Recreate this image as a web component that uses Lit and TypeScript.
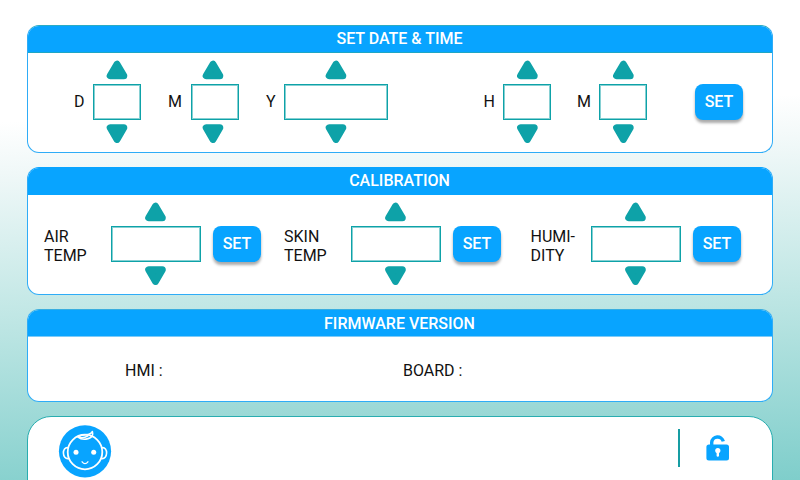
import { LitElement, html, css, svg } from "lit";
import { customElement, property } from "lit/decorators.js";

@customElement("value-stepper")
class ValueStepper extends LitElement {
  @property({ type: Number }) width = 48;
  @property({ type: Number }) shift = 0;

  static styles = css`
    :host {
      display: flex;
      flex-direction: column;
      align-items: center;
      flex: none;
    }
    .arrow {
      display: block;
      width: 22px;
      height: 20px;
      fill: #0ea2a8;
      stroke: #0ea2a8;
      stroke-width: 7px;
      stroke-linejoin: round;
    }
    .box {
      box-sizing: border-box;
      height: 36px;
      margin: 4px 0;
      border: 1px solid #0ea2a8;
      background: #fff;
      box-shadow: inset 0 0 0 1px #0ea2a880;
    }
  `;

  render() {
    const x = 11 + this.shift;
    const view = `${11 - x} 0 22 20`;
    const viewBox = this.shift ? `${-this.shift} 0 22 20` : view;
    return html`
      <svg class="arrow" overflow="visible" viewBox=${viewBox}>${svg`<path d="M11 4.2L4.2 15.8H17.8Z"/>`}</svg>
      <div class="box" style="width:${this.width}px"></div>
      <svg class="arrow" overflow="visible" viewBox=${viewBox}>${svg`<path d="M11 15.4L4.2 3.8H17.8Z"/>`}</svg>
    `;
  }
}

@customElement("titled-panel")
class TitledPanel extends LitElement {
  @property() heading = "";

  static styles = css`
    :host {
      display: flex;
      flex-direction: column;
      box-sizing: border-box;
      border: 1px solid #2eacf7;
      border-top-color: var(--top-line, #08a4ff);
      border-radius: 12px;
      background: #fff;
      overflow: hidden;
    }
    .heading {
      flex: none;
      box-sizing: border-box;
      height: var(--heading-height, 27px);
      line-height: var(--heading-line, 26px);
      border-bottom: 1px solid var(--rule, #08a4ff);
      background: #08a4ff;
      color: #fff;
      font-size: 16px;
      font-weight: 500;
      text-align: center;
      padding-right: 1px;
    }
    .body {
      flex: 1;
      display: flex;
      align-items: center;
      padding-bottom: 2px;
    }
  `;

  render() {
    return html`
      <div class="heading">${this.heading}</div>
      <div class="body"><slot></slot></div>
    `;
  }
}

@customElement("app-root")
class AppRoot extends LitElement {
  static styles = css`
    :host {
      display: flex;
      flex-direction: column;
      box-sizing: border-box;
      width: 800px;
      height: 480px;
      padding: 25px 27px 0;
      overflow: hidden;
      font: 16px/18.5px Roboto, "Liberation Sans", sans-serif;
      color: #111;
      background: linear-gradient(178deg, #fff 24%, #f0f8f8 34%, #c1e7e5 62%, #7fcecb 100%);
    }
    titled-panel {
      flex: none;
      height: 128px;
      margin-bottom: 14px;
    }
    .clock {
      --top-line: #2bacc4;
      --rule: #1ea6c4;
      --heading-line: 25px;
    }
    .firmware {
      height: 93px;
      --heading-height: 27px;
      --heading-line: 27px;
      --top-line: #38aee0;
      --rule: #7dcbf8;
    }
    .unit {
      display: flex;
      align-items: center;
      margin-left: var(--lead, 0);
    }
    .tag {
      width: var(--tag, 20px);
      flex: none;
      padding-top: 2px;
    }
    .set {
      flex: none;
      width: 48px;
      height: 36px;
      padding: 0;
      border: 0;
      border-radius: 8px;
      background: #08a4ff;
      box-shadow: 0 3px 3px #0005;
      color: #fff;
      font: 500 16px/35px Roboto, "Liberation Sans", sans-serif;
      text-align: center;
    }
    .calibrate .tag {
      padding-top: 6px;
    }
    .calibrate .set {
      margin-left: 12px;
    }
    .version {
      padding-top: 7px;
    }
    .hmi {
      margin-left: 97px;
      width: 278px;
    }
    .footer {
      flex: none;
      box-sizing: border-box;
      display: flex;
      align-items: flex-start;
      height: 90px;
      border: 1px solid #29adb0;
      border-radius: 24px;
      background: #fff;
    }
    .baby {
      width: 54px;
      height: 54px;
      margin: 7px 0 0 30px;
    }
    .rule {
      width: 1.5px;
      height: 38px;
      margin: 12px 0 0 566px;
      background: #169da3;
    }
    .lock {
      width: 25px;
      height: 28px;
      margin: 17px 0 0 25px;
    }
  `;

  private dateFields = [
    { label: "D", lead: 46, tag: 19, width: 48, shift: 0 },
    { label: "M", lead: 27, tag: 23, width: 48, shift: -2 },
    { label: "Y", lead: 27, tag: 18, width: 104, shift: 0 },
    { label: "H", lead: 95.5, tag: 19.5, width: 48, shift: 0.4 },
    { label: "M", lead: 26, tag: 22, width: 48, shift: 0.4 },
  ];

  private channels = [
    { lines: ["AIR", "TEMP"], lead: 16, tag: 67 },
    { lines: ["SKIN", "TEMP"], lead: 23, tag: 67 },
    { lines: ["HUMI-", "DITY"], lead: 29.5, tag: 60.5 },
  ];

  render() {
    return html`
      <titled-panel class="clock" heading="SET DATE & TIME">
        ${this.dateFields.map(
          (f) => html`<div class="unit" style="--lead:${f.lead}px;--tag:${f.tag}px">
            <span class="tag">${f.label}</span>
            <value-stepper .width=${f.width} .shift=${f.shift}></value-stepper>
          </div>`
        )}
        <div class="unit" style="--lead:48px"><button class="set">SET</button></div>
      </titled-panel>

      <titled-panel heading="CALIBRATION">
        ${this.channels.map(
          (c) => html`<div class="unit calibrate" style="--lead:${c.lead}px;--tag:${c.tag}px">
            <span class="tag">${c.lines[0]}<br />${c.lines[1]}</span>
            <value-stepper .width=${90} .shift=${-0.5}></value-stepper>
            <button class="set">SET</button>
          </div>`
        )}
      </titled-panel>

      <titled-panel class="firmware" heading="FIRMWARE VERSION">
        <span class="version hmi">HMI :</span>
        <span class="version">BOARD :</span>
      </titled-panel>

      <div class="footer">
        <svg class="baby" viewBox="0 0 54 54" fill="none" stroke="#fff" stroke-linecap="round">
          <circle cx="27" cy="27.3" r="26.1" fill="#08a4ff" stroke="none" />
          <path stroke-width="1.6" d="M10.2 23.7C3.7 22.2 3.7 36 10.8 34.5M43.8 23.7C50.3 22.2 50.3 36 43.2 34.5" />
          <circle cx="27" cy="28" r="17.3" stroke-width="1.8" />
          <path stroke-width="1.6" stroke-linejoin="round" d="M20 13.2C24.5 16.6 32 15.3 34.2 12C35.3 10.5 34.7 9 34.3 7.5C33 10.7 29.5 10.5 26.3 11C22.5 11.4 20.7 12 20 13.2C23 14 27.5 13.4 30 11.8" />
          <g fill="#fff" stroke="none">
            <circle cx="18" cy="28.3" r="2.5" />
            <circle cx="35.7" cy="28.3" r="2.5" />
          </g>
          <path stroke-width="1.3" d="M24.1 37.8Q27 41.3 29.9 37.8" />
        </svg>
        <div class="rule"></div>
        <svg class="lock" viewBox="0 0 25 28">
          <path d="M6.7 12V8.4A5.9 5.9 0 0 1 18.3 7.4" fill="none" stroke="#08a4ff" stroke-width="3.4" />
          <rect x="1.4" y="10.6" width="22.6" height="15.8" rx="2.5" fill="#08a4ff" />
          <circle cx="12.8" cy="16.6" r="2.6" fill="#fff" />
          <path d="M12.8 17V21.5" stroke="#fff" stroke-width="2.4" stroke-linecap="round" />
        </svg>
      </div>
    `;
  }
}
